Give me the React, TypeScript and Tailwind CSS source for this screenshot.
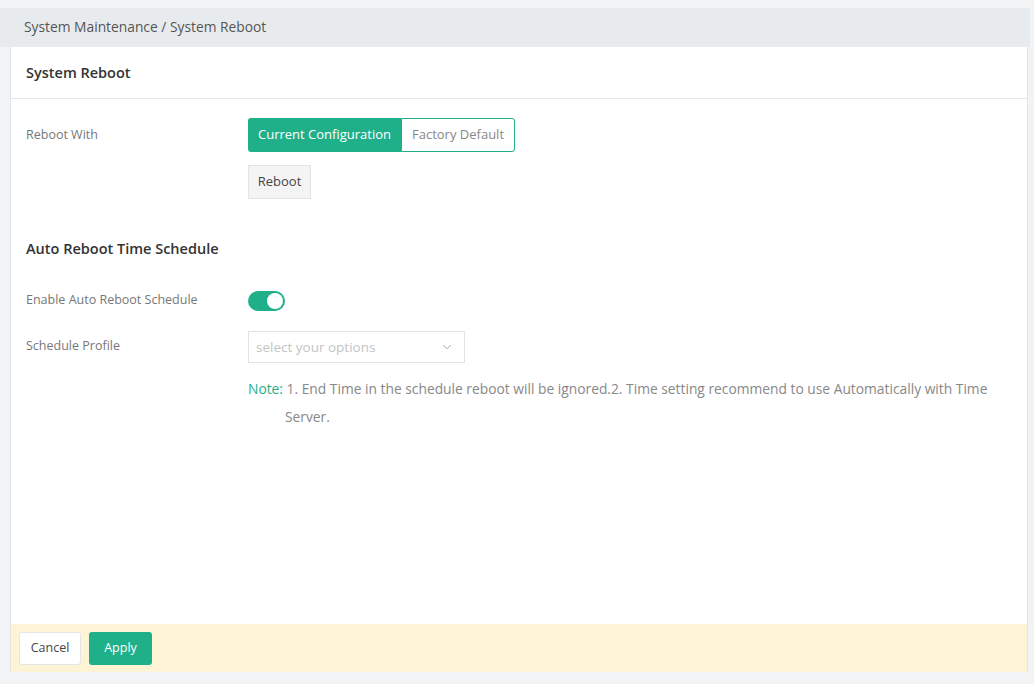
import { ChevronDown } from "lucide-react";

export default function App() {
  return (
    <div
      className="h-[684px] w-[1034px] overflow-hidden bg-[#f1f3f5] pt-2 text-[#555]"
      style={{ fontFamily: '"Open Sans", "Noto Sans", sans-serif' }}
    >
      <div className="mr-[4px] flex h-[39px] items-center bg-[#e8ebee] pl-6 text-[13.8px] text-[#555]">
        System Maintenance / System Reboot
      </div>
      <div className="ml-[10px] mr-[6px] flex h-[625px] flex-col border-x border-[#e2e4e6] bg-white">
        <div className="flex h-[52px] items-center border-b border-[#e6e6e6] pl-[15px] text-[14.5px] font-semibold text-[#333]">
          System Reboot
        </div>
        <div className="flex-1 pl-[15px] pt-[19px]">
          <div className="flex">
            <div className="w-[222px] pt-[8px] text-[12.5px] text-[#777]">Reboot With</div>
            <div className="flex flex-col">
              <div className="flex h-[34px] text-[13px]">
                <button className="rounded-l-[3px] bg-[#1fb08a] px-[10px] text-white">
                  Current Configuration
                </button>
                <button className="rounded-r-[3px] border border-[#1fb08a] bg-white px-[10px] text-[#888]">
                  Factory Default
                </button>
              </div>
              <button className="mt-[13px] h-[34px] w-[63px] border border-[#e3e3e3] bg-[#f4f4f4] text-[13px] text-[#444]">
                Reboot
              </button>
            </div>
          </div>

          <div className="mt-[39px] text-[14.5px] font-semibold text-[#333]">
            Auto Reboot Time Schedule
          </div>

          <div className="mt-[31px] flex items-center">
            <div className="w-[222px] text-[12.5px] text-[#777]">Enable Auto Reboot Schedule</div>
            <div className="flex h-[20px] w-[37px] items-center justify-end rounded-full bg-[#1fb08a] pr-[2px]">
              <div className="h-[16px] w-[16px] rounded-full bg-white" />
            </div>
          </div>

          <div className="mt-[20px] flex items-center">
            <div className="w-[222px] text-[12.5px] text-[#777]">Schedule Profile</div>
            <div className="flex h-[32px] w-[217px] items-center justify-between border border-[#e3e3e3] pl-[7px] pr-[10px] text-[13.5px] text-[#c4c4c4]">
              <span>select your options</span>
              <ChevronDown className="h-[14px] w-[14px] text-[#999]" strokeWidth={1.5} />
            </div>
          </div>

          <div className="mt-[12px] pl-[222px] text-[13.8px] leading-[28px] text-[#888]">
            <div>
              <span className="text-[#1fb08a]">Note:</span> 1. End Time in the schedule reboot will be ignored.2. Time setting recommend to use Automatically with Time
            </div>
            <div className="pl-[37px]">Server.</div>
          </div>
        </div>
        <div className="flex h-[48px] items-center gap-[8px] bg-[#fdf4d6] pl-[8px]">
          <button className="h-[33px] w-[62px] rounded-[3px] border border-[#e5e5e5] bg-white text-[12.5px] text-[#444]">
            Cancel
          </button>
          <button className="h-[33px] w-[63px] rounded-[3px] bg-[#1fb08a] text-[12.5px] text-white">
            Apply
          </button>
        </div>
      </div>
    </div>
  );
}
